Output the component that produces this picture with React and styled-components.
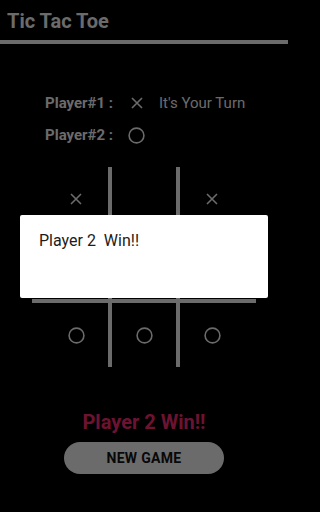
import React from 'react';
import styled, { createGlobalStyle } from 'styled-components';

const GlobalStyle = createGlobalStyle`
  html, body {
    margin: 0;
    padding: 0;
    background: #000;
  }
  body {
    font-family: Roboto, 'Liberation Sans', sans-serif;
    -webkit-font-smoothing: antialiased;
  }
`;

// base colours; the scrim over the page halves them
const grey = '#d6d6d6';
const accent = '#da2664';

const board = [
    ['X', '', 'X'],
    ['', 'X', ''],
    ['O', 'O', 'O'],
];

const Cross = ({ size = 12 }) => (
    <svg width={size} height={size} viewBox="0 0 12 12">
        <path d="M1 1 L11 11 M11 1 L1 11" stroke={grey} strokeWidth="1.6" fill="none" />
    </svg>
);

const Nought = ({ size = 17 }) => (
    <svg width={size} height={size} viewBox="0 0 17 17">
        <circle cx="8.5" cy="8.5" r="7.4" stroke={grey} strokeWidth="1.6" fill="none" />
    </svg>
);

const Mark = ({ value }) => {
    if (value === 'X') return <Cross />;
    if (value === 'O') return <Nought />;
    return null;
};

const App = () => {
    return (
        <>
            <GlobalStyle />
            <Page>
                <Header>
                    <Title>Tic Tac Toe</Title>
                </Header>

                <Players>
                    <PlayerRow>
                        <PlayerLabel>Player#1 :</PlayerLabel>
                        <MarkSlot><Cross /></MarkSlot>
                        <TurnNote>It's Your Turn</TurnNote>
                    </PlayerRow>
                    <PlayerRow>
                        <PlayerLabel>Player#2 :</PlayerLabel>
                        <MarkSlot><Nought /></MarkSlot>
                    </PlayerRow>
                </Players>

                <Board>
                    <VLine $col={3} />
                    <VLine $col={5} />
                    <HLine $row={2} />
                    <HLine $row={4} />
                    {board.map((row, r) =>
                        row.map((cell, c) => (
                            <Cell key={`${r}-${c}`} $row={r * 2 + 1} $col={c * 2 + 2}>
                                <Mark value={cell} />
                            </Cell>
                        ))
                    )}
                </Board>

                <WinText>Player 2 Win!!</WinText>
                <NewGameButton>NEW GAME</NewGameButton>

                <Scrim>
                    <Dialog>
                        <DialogMessage>Player 2  Win!!</DialogMessage>
                    </Dialog>
                </Scrim>
            </Page>
        </>
    );
};

const Page = styled.div`
    position: relative;
    width: 288px;
    height: 512px;
    display: flex;
    flex-direction: column;
    align-items: center;
    background: #000;
    overflow: hidden;
`;

const Header = styled.div`
    align-self: stretch;
    height: 40px;
    padding: 0 7px;
    display: flex;
    align-items: center;
    border-bottom: 4px solid ${grey};
`;

const Title = styled.div`
    color: ${grey};
    font-size: 20px;
    font-weight: 700;
    line-height: 1;
    margin-top: 1px;
`;

const Players = styled.div`
    align-self: stretch;
    margin-top: 43px;
    padding-left: 45px;
    display: flex;
    flex-direction: column;
`;

const PlayerRow = styled.div`
    height: 32px;
    display: flex;
    align-items: center;
`;

const PlayerLabel = styled.span`
    width: 83px;
    color: ${grey};
    font-size: 15px;
    font-weight: 700;
`;

const MarkSlot = styled.span`
    width: 17px;
    height: 17px;
    display: flex;
    align-items: center;
    justify-content: center;
`;

const TurnNote = styled.span`
    margin-left: 14px;
    color: ${grey};
    font-size: 15px;
`;

const Board = styled.div`
    margin-top: 16px;
    width: 224px;
    display: grid;
    grid-template-columns: 12px 64px 4px 64px 4px 64px 12px;
    grid-template-rows: 64px 4px 64px 4px 64px;
`;

const VLine = styled.div`
    grid-column: ${p => p.$col};
    grid-row: 1 / -1;
    background: ${grey};
`;

const HLine = styled.div`
    grid-column: 1 / -1;
    grid-row: ${p => p.$row};
    background: ${grey};
`;

const Cell = styled.div`
    grid-column: ${p => p.$col};
    grid-row: ${p => p.$row};
    display: flex;
    align-items: center;
    justify-content: center;
`;

const WinText = styled.div`
    margin-top: 41px;
    color: ${accent};
    font-size: 20px;
    font-weight: 700;
    line-height: 28px;
`;

const NewGameButton = styled.button`
    margin-top: 6px;
    width: 160px;
    height: 32px;
    border: none;
    border-radius: 16px;
    background: ${grey};
    color: #111;
    font-family: Roboto, 'Liberation Sans', sans-serif;
    font-size: 14px;
    font-weight: 700;
    letter-spacing: 0.3px;
    cursor: pointer;
`;

const Scrim = styled.div`
    position: absolute;
    inset: 0;
    background: rgba(0, 0, 0, 0.5);
    display: flex;
    align-items: center;
    justify-content: center;
`;

const Dialog = styled.div`
    width: 248px;
    height: 83px;
    box-sizing: border-box;
    padding: 16px 19px;
    background: #fff;
    border-radius: 2px;
`;

const DialogMessage = styled.div`
    color: #1c1c1c;
    font-size: 16px;
    line-height: 20px;
    white-space: pre;
`;

export default App;
